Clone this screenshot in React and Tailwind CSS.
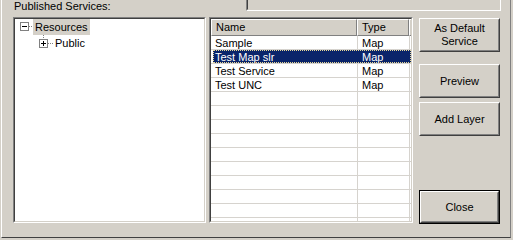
import React from 'react';

const rows = [
  { name: 'Sample', type: 'Map' },
  { name: 'Test Map slr', type: 'Map', selected: true },
  { name: 'Test Service', type: 'Map' },
  { name: 'Test UNC', type: 'Map' },
];

const Sunken = ({ className, children }) => (
  <div className={`border border-t-[#808080] border-l-[#808080] border-b-white border-r-white ${className}`}>
    <div className="h-full w-full border border-t-[#404040] border-l-[#404040] border-b-[#d4d0c8] border-r-[#d4d0c8] bg-white overflow-hidden">
      {children}
    </div>
  </div>
);

const Button = ({ children, isDefault, className }) => {
  if (isDefault) {
    return (
      <div className={`border border-black ${className}`}>
        <div className="h-full border border-t-white border-l-white border-b-[#404040] border-r-[#404040]">
          <div className="h-full flex items-center justify-center border border-t-[#d4d0c8] border-l-[#d4d0c8] border-b-[#808080] border-r-[#808080]">
            {children}
          </div>
        </div>
      </div>
    );
  }
  return (
    <div className={`border border-t-white border-l-white border-b-[#404040] border-r-[#404040] ${className}`}>
      <div className="h-full flex flex-col items-center justify-center text-center border border-t-[#d4d0c8] border-l-[#d4d0c8] border-b-[#808080] border-r-[#808080]">
        {children}
      </div>
    </div>
  );
};

export default function App() {
  const empty = Array.from({ length: 11 });

  return (
    <div className="w-[513px] h-[240px] bg-[#d4d0c8] overflow-hidden font-['Liberation_Sans',Arial,sans-serif] text-[11px] leading-[13px] text-black">
      <div className="ml-px w-[510px] h-[238px] border-l border-l-white border-r border-r-[#808080] border-b border-b-[#404040]">
        {/* top row */}
        <div className="flex h-[17px]">
          <div className="w-[244px] pl-[12px]">Published Services:</div>
          <div className="w-[255px] h-[11px] border-l border-l-[#808080] border-b border-b-white border-r border-r-white">
            <div className="h-full border-l border-l-[#404040] border-b border-b-[#d4d0c8] border-r border-r-[#d4d0c8]" />
          </div>
        </div>

        <div className="flex pl-[11px]">
          {/* tree */}
          <Sunken className="w-[193px] h-[206px]">
            <div className="flex h-[16px] items-center">
              <svg width="18" height="16" className="shrink-0" shapeRendering="crispEdges">
                <rect x="5.5" y="3.5" width="8" height="8" fill="white" stroke="#808080" />
                <line x1="7" y1="7.5" x2="12" y2="7.5" stroke="black" />
                <line x1="14" y1="7.5" x2="18" y2="7.5" stroke="#808080" strokeDasharray="1 1" />
              </svg>
              <span className="h-[16px] bg-[#d4d0c8] px-[2px] leading-[16px]">Resources</span>
            </div>
            <div className="flex h-[16px] items-center">
              <svg width="40" height="16" className="shrink-0" shapeRendering="crispEdges">
                <line x1="28.5" y1="0" x2="28.5" y2="4" stroke="#808080" strokeDasharray="1 1" />
                <rect x="24.5" y="4.5" width="8" height="8" fill="white" stroke="#808080" />
                <line x1="26" y1="8.5" x2="31" y2="8.5" stroke="black" />
                <line x1="28.5" y1="6" x2="28.5" y2="11" stroke="black" />
                <line x1="33" y1="8.5" x2="39" y2="8.5" stroke="#808080" strokeDasharray="1 1" />
              </svg>
              <span className="leading-[16px]">Public</span>
            </div>
          </Sunken>

          {/* list */}
          <Sunken className="ml-[3px] w-[204px] h-[206px]">
            <div className="flex h-[17px] bg-[#d4d0c8]">
              <div className="w-[146px] border-t border-l border-t-white border-l-white border-r border-b border-r-[#808080] border-b-[#808080] pl-[4px] leading-[15px]">Name</div>
              <div className="w-[52px] border-t border-l border-t-white border-l-white border-r border-b border-r-[#808080] border-b-[#808080] pl-[4px] leading-[15px]">Type</div>
              <div className="flex-1 border-t border-l border-t-white border-l-white border-b border-b-[#808080]" />
            </div>
            {rows.map((r) => (
              <div key={r.name} className="pl-[2px] h-[14px] border-b border-b-[#d6d3ce]">
                <div className={`flex h-full ${r.selected ? 'bg-[#0a246a] text-white outline outline-1 outline-dotted outline-offset-[-1px] outline-[#e8d898]' : ''}`}>
                  <div className={`w-[145px] pl-[2px] pt-px leading-[13px] ${r.selected ? '' : 'border-r border-r-[#d6d3ce]'}`}>{r.name}</div>
                  <div className={`w-[52px] pl-[4px] pt-px leading-[13px] ${r.selected ? '' : 'border-r border-r-[#d6d3ce]'}`}>{r.type}</div>
                </div>
              </div>
            ))}
            {empty.map((_, i) => (
              <div key={i} className="pl-[2px] h-[14px] border-b border-b-[#d6d3ce]">
                <div className="flex h-full">
                  <div className="w-[145px] border-r border-r-[#d6d3ce]" />
                  <div className="w-[52px] border-r border-r-[#d6d3ce]" />
                </div>
              </div>
            ))}
          </Sunken>

          {/* buttons */}
          <div className="ml-[6px] w-[81px] pt-px flex flex-col">
            <Button className="h-[34px]">
              <span>As Default</span>
              <span>Service</span>
            </Button>
            <Button className="mt-[12px] h-[34px]">Preview</Button>
            <Button className="mt-[4px] h-[34px]">Add Layer</Button>
            <Button isDefault className="mt-[54px] h-[34px]">Close</Button>
          </div>
        </div>
      </div>
    </div>
  );
}
